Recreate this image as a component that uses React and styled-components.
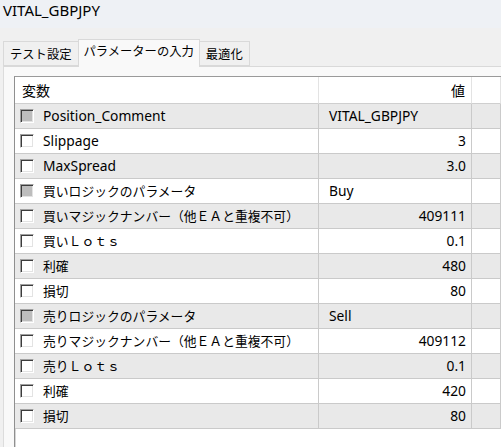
import React from "react";
import styled, { createGlobalStyle } from "styled-components";

const Global = createGlobalStyle`
  html, body { margin: 0; padding: 0; }
  body {
    background: #f0f0f0;
    font-family: "Noto Sans", "Noto Sans CJK JP", sans-serif;
    color: #000;
    overflow: hidden;
  }
  #root { height: 100vh; }
`;

const Window = styled.div`
  height: 100vh;
  display: flex;
  flex-direction: column;
  background: #f0f0f0;
`;

const TitleBar = styled.div`
  height: 28px;
  flex: none;
  box-sizing: border-box;
  padding: 1px 3px 0;
  background: #eef1f5;
  font-size: 15px;
  line-height: 19px;
`;

const TabStrip = styled.div`
  height: 38px;
  flex: none;
  display: flex;
  align-items: flex-end;
  padding-left: 3px;
  position: relative;
  z-index: 1;
`;

const Tab = styled.div`
  box-sizing: border-box;
  height: ${(p) => (p.$active ? "28px" : "25px")};
  margin-bottom: ${(p) => (p.$active ? "-1px" : "0")};
  margin-left: ${(p) => (p.$active ? "-1px" : "0")};
  margin-right: ${(p) => (p.$active ? "-1px" : "0")};
  padding: ${(p) => (p.$active ? "2px 5px 0" : "3px 6px 0")};
  border: 1px solid #d9d9d9;
  border-bottom: ${(p) => (p.$active ? "none" : "1px solid #d9d9d9")};
  background: ${(p) => (p.$active ? "#f9f9f9" : "#f0f0f0")};
  font-size: 12.3px;
  line-height: 19px;
  white-space: nowrap;
  position: relative;
  z-index: ${(p) => (p.$active ? 2 : 1)};
`;

const Panel = styled.div`
  flex: 1;
  min-height: 0;
  display: flex;
  flex-direction: column;
  margin-left: 3px;
  padding: 9px 0 0 10px;
  background: #f9f9f9;
  border-top: 1px solid #d9d9d9;
  border-left: 1px solid #dcdcdc;
`;

const Grid = styled.div`
  flex: 1;
  display: grid;
  grid-template-columns: 304px 153px 1fr;
  grid-auto-rows: 25px;
  grid-template-rows: 27px;
  align-content: start;
  background: #fff;
  border-top: 1px solid #9a9a9a;
  border-left: 1px solid #8f8f8f;
  box-shadow: inset 1px 0 0 #d6d6d6;
  font-size: 13.8px;
`;

const HeadCell = styled.div`
  box-sizing: border-box;
  display: flex;
  align-items: center;
  justify-content: ${(p) => (p.$right ? "flex-end" : "flex-start")};
  padding: 0 ${(p) => (p.$right ? "6px" : "0")} 1px ${(p) => (p.$right ? "0" : "7px")};
  border-right: 1px solid #e3e3e3;
  border-bottom: 1px solid #cfcfcf;
  background: #fff;
  font-size: 14px;
  white-space: nowrap;
`;

const Cell = styled.div`
  box-sizing: border-box;
  display: flex;
  align-items: center;
  justify-content: ${(p) => (p.$right ? "flex-end" : "flex-start")};
  padding: ${(p) =>
    p.$right ? "0 5px 1px 0" : p.$value ? "0 0 1px 10px" : "0 0 1px 5px"};
  border-right: 1px solid #cacaca;
  border-bottom: 1px solid #cacaca;
  background: ${(p) => (p.$odd ? "#e9e9e9" : "#fff")};
  white-space: nowrap;
  overflow: hidden;
`;

const Label = styled.span`
  font-size: ${(p) => (p.$jp ? "12.8px" : "13.8px")};
`;

const Check = styled.span`
  box-sizing: border-box;
  flex: none;
  width: 14px;
  height: 14px;
  margin-right: 9px;
  border-top: 1px solid #a0a0a0;
  border-left: 1px solid #a0a0a0;
  border-right: 1px solid #fff;
  border-bottom: 1px solid #fff;
  box-shadow: inset 1px 1px 0 #3c3c3c, inset -1px -1px 0 #e3e3e3;
  background: ${(p) => (p.$disabled ? "#bdbdbd" : "#fff")};
`;

const rows = [
  { name: "Position_Comment", value: "VITAL_GBPJPY", group: true },
  { name: "Slippage", value: "3" },
  { name: "MaxSpread", value: "3.0" },
  { name: "買いロジックのパラメータ", value: "Buy", group: true, jp: true },
  { name: "買いマジックナンバー（他ＥＡと重複不可）", value: "409111", jp: true },
  { name: "買いＬｏｔｓ", value: "0.1", jp: true },
  { name: "利確", value: "480", jp: true },
  { name: "損切", value: "80", jp: true },
  { name: "売りロジックのパラメータ", value: "Sell", group: true, jp: true },
  { name: "売りマジックナンバー（他ＥＡと重複不可）", value: "409112", jp: true },
  { name: "売りＬｏｔｓ", value: "0.1", jp: true },
  { name: "利確", value: "420", jp: true },
  { name: "損切", value: "80", jp: true },
];

export default function App() {
  return (
    <>
      <Global />
      <Window>
        <TitleBar>VITAL_GBPJPY</TitleBar>
        <TabStrip>
          <Tab>テスト設定</Tab>
          <Tab $active>パラメーターの入力</Tab>
          <Tab>最適化</Tab>
        </TabStrip>
        <Panel>
          <Grid>
            <HeadCell>変数</HeadCell>
            <HeadCell $right>値</HeadCell>
            <HeadCell />
            {rows.map((r, i) => {
              const odd = i % 2 === 0;
              return (
                <React.Fragment key={i}>
                  <Cell $odd={odd}>
                    <Check $disabled={r.group} />
                    <Label $jp={r.jp}>{r.name}</Label>
                  </Cell>
                  <Cell $odd={odd} $right={!r.group} $value={r.group}>
                    {r.value}
                  </Cell>
                  <Cell $odd={odd} />
                </React.Fragment>
              );
            })}
          </Grid>
        </Panel>
      </Window>
    </>
  );
}
